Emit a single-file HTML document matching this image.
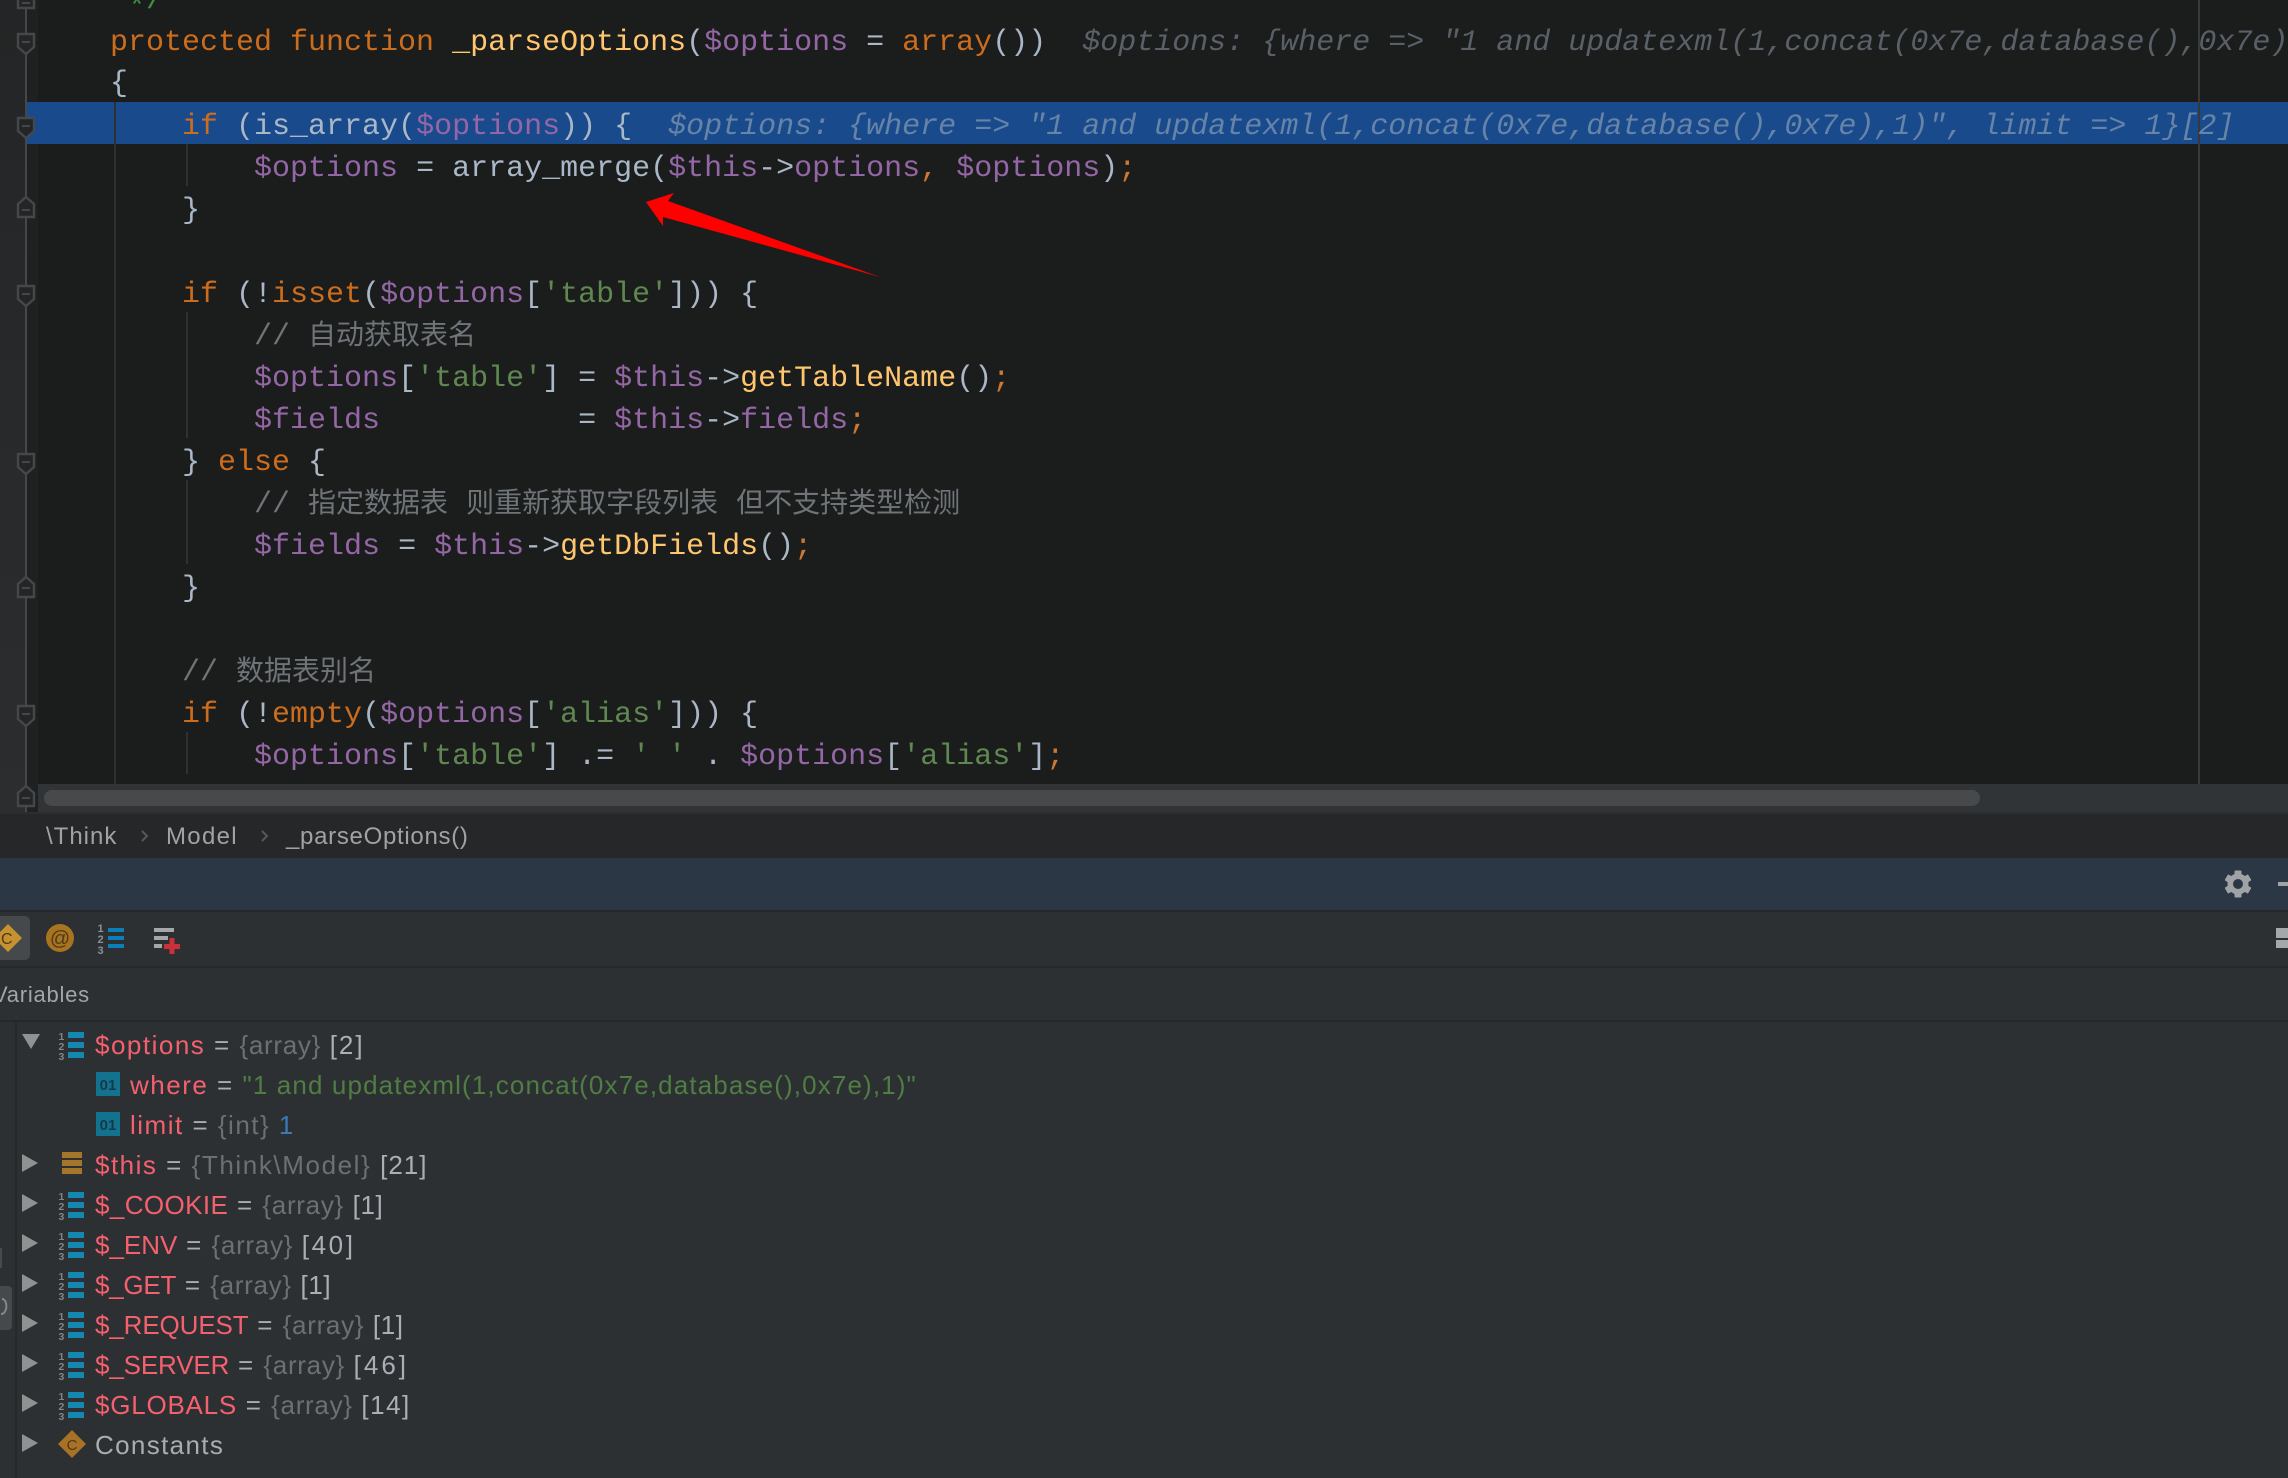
<!DOCTYPE html>
<html><head><meta charset="utf-8">
<style>
html,body{margin:0;padding:0;background:#2d3033}
#r{position:relative;width:2288px;height:1478px;overflow:hidden;background:#2d3033}
.b{position:absolute}
.l{position:absolute;left:110px;height:42px;line-height:42px;white-space:pre;font:30px/42px "Liberation Mono","Noto Sans CJK SC",monospace;color:#a9b7c6}
.k{color:#cc6c1d}.f{color:#ffc66d}.v{color:#9466a5}.s{color:#5f8750}.c{color:#6f7478}.o{color:#cc7832}
.h{font-style:italic;color:#5a6068}
.hb{font-style:italic;color:#6683a8}
.z{font-size:28px}
.t{position:absolute;left:95px;height:40px;line-height:40px;white-space:pre;font:26px/40px "Liberation Sans",sans-serif;letter-spacing:1.5px;color:#a9adb0}
.n{color:#f4606e}.g{color:#6d7073;letter-spacing:.7px}.w{color:#a9b0b5}.st{color:#4f7d43;letter-spacing:1.13px}.bl{color:#3c78b5}
.cr{position:absolute;top:814px;height:46px;line-height:46px;font:24px/46px "Liberation Sans",sans-serif;letter-spacing:.7px;color:#a0a2a4;white-space:pre}
</style></head><body><div id="r">

<!-- editor -->
<div class="b" style="left:0;top:0;width:2288px;height:812px;background:#1b1d1d"></div>
<div class="b" style="left:0;top:0;width:26px;height:812px;background:linear-gradient(#242526,#2b2d2f)"></div>
<div class="b" style="left:26px;top:0;width:12px;height:812px;background:#1f2021"></div>
<div class="b" style="left:27px;top:102px;width:2261px;height:42px;background:#194a8c"></div>

<!-- indent guides -->
<div class="b" style="left:114px;top:102px;width:2px;height:682px;background:#2e3033"></div>
<div class="b" style="left:186px;top:144px;width:2px;height:42px;background:#2e3033"></div>
<div class="b" style="left:186px;top:312px;width:2px;height:126px;background:#2e3033"></div>
<div class="b" style="left:186px;top:480px;width:2px;height:84px;background:#2e3033"></div>
<div class="b" style="left:186px;top:732px;width:2px;height:42px;background:#2e3033"></div>
<div class="b" style="left:2198px;top:0;width:2px;height:784px;background:#38393a"></div>

<!-- gutter folds -->
<svg class="b" style="left:0;top:0" width="40" height="812" viewBox="0 0 40 812" fill="none" stroke="#45474a" stroke-width="2.4">
<path d="M26 0V812" stroke-width="2"/>
<g fill="#232526">
<path d="M18 -12H34V8H18Z"/><path d="M22 3H30" stroke-width="2"/>
<path d="M18 34H34V47L26 54L18 47Z"/><path d="M22 42H30" stroke-width="2"/>
<path d="M18 118H34V131L26 138L18 131Z"/><path d="M22 126H30" stroke-width="2"/>
<path d="M18 217H34V204L26 197L18 204Z"/><path d="M22 210H30" stroke-width="2"/>
<path d="M18 286H34V299L26 306L18 299Z"/><path d="M22 294H30" stroke-width="2"/>
<path d="M18 454H34V467L26 474L18 467Z"/><path d="M22 462H30" stroke-width="2"/>
<path d="M18 597H34V584L26 577L18 584Z"/><path d="M22 588H30" stroke-width="2"/>
<path d="M18 706H34V719L26 726L18 719Z"/><path d="M22 714H30" stroke-width="2"/>
<path d="M18 806H34V793L26 786L18 793Z"/><path d="M22 798H30" stroke-width="2"/>
</g></svg>

<!-- code -->
<div class="l" style="top:-20px;color:#3f8f3f"> <span style="position:relative;top:7px">*</span>/</div>
<div class="l" style="top:22px"><span class="k">protected function </span><span class="f">_parseOptions</span>(<span class="v">$options</span> = <span class="k">array</span>())  <span class="h">$options: {where =&gt; "1 and updatexml(1,concat(0x7e,database(),0x7e),1)", limit =&gt; 1}[2]</span></div>
<div class="l" style="top:63px">{</div>
<div class="l" style="top:106px">    <span class="k">if</span> (is_array(<span class="v">$options</span>)) {  <span class="hb">$options: {where =&gt; "1 and updatexml(1,concat(0x7e,database(),0x7e),1)", limit =&gt; 1}[2]</span></div>
<div class="l" style="top:148px">        <span class="v">$options</span> = array_merge(<span class="v">$this</span>-&gt;<span class="v">options</span><span class="o">,</span> <span class="v">$options</span>)<span class="o">;</span></div>
<div class="l" style="top:190px">    }</div>
<div class="l" style="top:274px">    <span class="k">if</span> (!<span class="k">isset</span>(<span class="v">$options</span>[<span class="s">'table'</span>])) {</div>
<div class="l" style="top:316px">        <span class="c">// <span class="z">自动获取表名</span></span></div>
<div class="l" style="top:358px">        <span class="v">$options</span>[<span class="s">'table'</span>] = <span class="v">$this</span>-&gt;<span class="f">getTableName</span>()<span class="o">;</span></div>
<div class="l" style="top:400px">        <span class="v">$fields</span>           = <span class="v">$this</span>-&gt;<span class="v">fields</span><span class="o">;</span></div>
<div class="l" style="top:442px">    } <span class="k">else</span> {</div>
<div class="l" style="top:484px">        <span class="c">// <span class="z">指定数据表</span> <span class="z">则重新获取字段列表</span> <span class="z">但不支持类型检测</span></span></div>
<div class="l" style="top:526px">        <span class="v">$fields</span> = <span class="v">$this</span>-&gt;<span class="f">getDbFields</span>()<span class="o">;</span></div>
<div class="l" style="top:568px">    }</div>
<div class="l" style="top:652px">    <span class="c">// <span class="z">数据表别名</span></span></div>
<div class="l" style="top:694px">    <span class="k">if</span> (!<span class="k">empty</span>(<span class="v">$options</span>[<span class="s">'alias'</span>])) {</div>
<div class="l" style="top:736px">        <span class="v">$options</span>[<span class="s">'table'</span>] .= <span class="s">' '</span> . <span class="v">$options</span>[<span class="s">'alias'</span>]<span class="o">;</span></div>

<!-- arrow -->
<svg class="b" style="left:0;top:0" width="900" height="300"><polygon points="646,202 674,193 668,201 880,277 663,217 663,226" fill="#fe0000"/></svg>

<!-- scrollbar -->
<div class="b" style="left:38px;top:784px;width:2250px;height:28px;background:#313437"></div>
<div class="b" style="left:44px;top:790px;width:1936px;height:16px;border-radius:8px;background:#47494b"></div>

<!-- breadcrumb -->
<div class="b" style="left:0;top:812px;width:2288px;height:46px;background:#252728;border-top:2px solid #2b2d2f;box-sizing:border-box"></div>
<div class="cr" style="left:46px;letter-spacing:1px">\Think</div>
<div class="cr" style="left:166px;letter-spacing:1.3px">Model</div>
<div class="cr" style="left:286px">_parseOptions()</div>
<svg class="b" style="left:0;top:812px" width="300" height="46" fill="none" stroke="#57595b" stroke-width="2"><path d="M142 19L147 24L142 29M262 19L267 24L262 29"/></svg>

<!-- panel title -->
<div class="b" style="left:0;top:858px;width:2288px;height:52px;background:#2b3744"></div>
<div class="b" style="left:0;top:910px;width:2288px;height:2px;background:#252728"></div>
<div class="b" style="left:0;top:966px;width:2288px;height:2px;background:#252728"></div>
<div class="b" style="left:0;top:1020px;width:2288px;height:2px;background:#252728"></div>
<svg class="b" style="left:2220px;top:866px" width="36" height="36" viewBox="0 0 36 36"><g fill="#a0a3a5"><circle cx="18" cy="18" r="10.5"/><g id="tt"><rect x="14.5" y="4.5" width="7" height="27" rx="1"/><rect x="14.5" y="4.5" width="7" height="27" rx="1" transform="rotate(60 18 18)"/><rect x="14.5" y="4.5" width="7" height="27" rx="1" transform="rotate(120 18 18)"/></g></g><circle cx="18" cy="18" r="5" fill="#2b3744"/></svg>
<div class="b" style="left:2278px;top:882px;width:10px;height:4px;background:#a0a3a5"></div>

<!-- toolbar -->
<div class="b" style="left:-8px;top:916px;width:38px;height:44px;border-radius:5px;background:#45494c"></div>
<svg class="b" style="left:0;top:912px" width="200" height="54">
<polygon points="8,12 22,26 8,40 -6,26" fill="#c8912f"/>
<text x="1" y="32" font-family="Liberation Sans" font-size="16" fill="#4a3a1c">C</text>
<ellipse cx="60" cy="26" rx="14" ry="14" fill="#a87420"/>
<text x="60" y="33" text-anchor="middle" font-family="Liberation Sans" font-size="20" fill="#4e3a18">@</text>
<g font-family="Liberation Sans" font-size="11" font-weight="bold" fill="#8b9198"><text x="97.5" y="20">1</text><text x="97.5" y="31">2</text><text x="97.5" y="42">3</text></g>
<rect x="108" y="16" width="16" height="4" fill="#0d7fb8"/><rect x="108" y="24" width="16" height="4" fill="#0d7fb8"/><rect x="108" y="32" width="16" height="4" fill="#0d7fb8"/>
<rect x="154" y="16" width="20" height="4" fill="#a5a8aa"/><rect x="154" y="24" width="14" height="4" fill="#a5a8aa"/><rect x="154" y="32" width="8" height="4" fill="#a5a8aa"/>
<rect x="164" y="32" width="16" height="5" fill="#cb2f3a"/><rect x="169.5" y="26" width="5" height="16" fill="#cb2f3a"/>
</svg>
<div class="b" style="left:2276px;top:928px;width:12px;height:10px;background:#a5a8aa"></div>
<div class="b" style="left:2276px;top:940px;width:12px;height:8px;background:#a5a8aa"></div>

<!-- variables header -->
<div style="position:absolute;left:-7px;top:975px;height:40px;font:22px/40px 'Liberation Sans',sans-serif;letter-spacing:.75px;color:#a3a5a7">Variables</div>

<!-- left rail -->
<div class="b" style="left:15px;top:1022px;width:2px;height:456px;background:#26282a"></div>
<div class="b" style="left:0;top:1248px;width:2px;height:20px;background:#47494b"></div>
<div class="b" style="left:-6px;top:1286px;width:18px;height:44px;border-radius:4px;background:#46494c"></div>
<svg class="b" style="left:0;top:1296px" width="10" height="24" fill="none" stroke="#85888a" stroke-width="2"><path d="M2 3C8 3 8 18 1 18"/></svg>

<!-- tree icons -->
<svg class="b" style="left:0;top:1020px" width="130" height="458">
<defs>
<g id="a"><g font-family="Liberation Sans" font-size="10.5" font-weight="bold" fill="#7e858c"><text x="58.5" y="20">1</text><text x="58.5" y="30">2</text><text x="58.5" y="40">3</text></g><rect x="68" y="12" width="16" height="6" fill="#1488b0"/><rect x="68" y="22" width="16" height="6" fill="#1488b0"/><rect x="68" y="32" width="16" height="6" fill="#1488b0"/></g>
<polygon id="tr" points="22,14 38,23 22,32" fill="#8f9193"/>
</defs>
<polygon points="22,14 40,14 31,29" fill="#8f9193"/>
<use href="#a"/>
<rect x="96" y="52" width="24" height="24" fill="#13738f"/><text x="108" y="70" text-anchor="middle" font-family="Liberation Sans" font-weight="bold" font-size="15" fill="#16394a">01</text>
<rect x="96" y="92" width="24" height="24" fill="#13738f"/><text x="108" y="110" text-anchor="middle" font-family="Liberation Sans" font-weight="bold" font-size="15" fill="#16394a">01</text>
<use href="#tr" y="120"/>
<rect x="62" y="132" width="20" height="6" fill="#a5752a"/><rect x="62" y="140" width="20" height="6" fill="#a5752a"/><rect x="62" y="148" width="20" height="6" fill="#a5752a"/>
<use href="#tr" y="160"/><use href="#a" y="160"/>
<use href="#tr" y="200"/><use href="#a" y="200"/>
<use href="#tr" y="240"/><use href="#a" y="240"/>
<use href="#tr" y="280"/><use href="#a" y="280"/>
<use href="#tr" y="320"/><use href="#a" y="320"/>
<use href="#tr" y="360"/><use href="#a" y="360"/>
<use href="#tr" y="400"/>
<polygon points="72,410 86,424 72,438 58,424" fill="#a87226"/>
<text x="72" y="430" text-anchor="middle" font-family="Liberation Sans" font-size="15" fill="#4a3a1c">C</text>
</svg>

<!-- tree text -->
<div class="t" style="top:1025px"><span class="n">$options</span> = <span class="g">{array}</span> <span class="w" style="letter-spacing:2px">[2]</span></div>
<div class="t" style="top:1065px;left:130px"><span class="n">where</span> = <span class="st">"1 and updatexml(1,concat(0x7e,database(),0x7e),1)"</span></div>
<div class="t" style="top:1105px;left:130px"><span class="n">limit</span> = <span class="g" style="letter-spacing:1.5px">{int}</span> <span class="bl">1</span></div>
<div class="t" style="top:1145px"><span class="n">$this</span> = <span class="g" style="letter-spacing:1.6px">{Think\Model}</span> <span class="w" style="letter-spacing:1px">[21]</span></div>
<div class="t" style="top:1185px"><span class="n" style="letter-spacing:.4px">$_COOKIE</span> = <span class="g">{array}</span> <span class="w" style="letter-spacing:.6px">[1]</span></div>
<div class="t" style="top:1225px"><span class="n" style="letter-spacing:0">$_ENV</span> = <span class="g">{array}</span> <span class="w" style="letter-spacing:2.6px">[40]</span></div>
<div class="t" style="top:1265px"><span class="n" style="letter-spacing:-.25px">$_GET</span> = <span class="g">{array}</span> <span class="w" style="letter-spacing:.6px">[1]</span></div>
<div class="t" style="top:1305px"><span class="n" style="letter-spacing:-.12px">$_REQUEST</span> = <span class="g">{array}</span> <span class="w" style="letter-spacing:.6px">[1]</span></div>
<div class="t" style="top:1345px"><span class="n" style="letter-spacing:-.14px">$_SERVER</span> = <span class="g">{array}</span> <span class="w" style="letter-spacing:3px">[46]</span></div>
<div class="t" style="top:1385px"><span class="n" style="letter-spacing:.77px">$GLOBALS</span> = <span class="g">{array}</span> <span class="w">[14]</span></div>
<div class="t" style="top:1425px;letter-spacing:1.35px">Constants</div>
</div></body></html>
